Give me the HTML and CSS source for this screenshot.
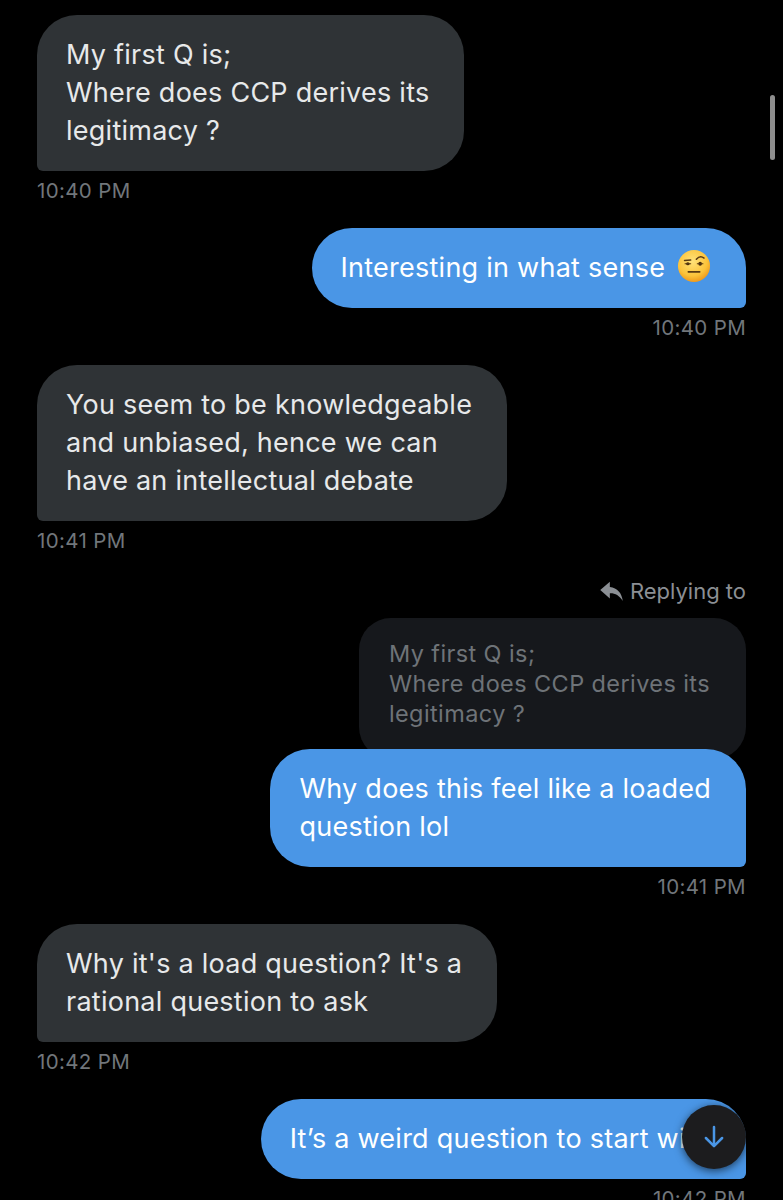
FILE: index.html
```html
<!DOCTYPE html>
<html lang="en">
<head>
<meta charset="utf-8">
<title>Chat</title>
<link rel="stylesheet" href="styles.css">
</head>
<body>
<main class="chat">
  <div class="msg in">
    <div class="bubble">My first Q is;<br>Where does CCP derives its<br>legitimacy ?</div>
    <div class="time">10:40 PM</div>
  </div>

  <div class="msg out">
    <div class="bubble">Interesting in what sense <svg class="emoji" viewBox="0 0 36 36" aria-label="face with raised eyebrow">
      <defs>
        <radialGradient id="eg" cx="45%" cy="35%" r="65%">
          <stop offset="0" stop-color="#ffe27a"/>
          <stop offset="0.7" stop-color="#fcc33a"/>
          <stop offset="1" stop-color="#ef9a1c"/>
        </radialGradient>
      </defs>
      <circle cx="18" cy="18" r="17" fill="url(#eg)"/>
      <path d="M8 12.2 L14.5 11.6" stroke="#5a3a12" stroke-width="1.6" stroke-linecap="round" fill="none"/>
      <path d="M20.5 10.8 Q24.5 6.2 28.6 9.6" stroke="#5a3a12" stroke-width="1.6" stroke-linecap="round" fill="none"/>
      <ellipse cx="11.5" cy="15.6" rx="1.9" ry="1.7" fill="#4a2d0c"/>
      <ellipse cx="24.5" cy="15.6" rx="1.9" ry="2.2" fill="#4a2d0c"/>
      <path d="M8.5 15.6 H14.5 M21.5 15.6 H27.5" stroke="#5a3a12" stroke-width="1.1" stroke-linecap="round"/>
      <path d="M12 24.2 H24" stroke="#5a3a12" stroke-width="1.8" stroke-linecap="round"/>
    </svg></div>
    <div class="time">10:40 PM</div>
  </div>

  <div class="msg in">
    <div class="bubble">You seem to be knowledgeable<br>and unbiased, hence we can<br>have an intellectual debate</div>
    <div class="time">10:41 PM</div>
  </div>

  <div class="msg out">
    <div class="reply-label">
      <svg class="reply-icon" viewBox="0 0 24 24" aria-hidden="true">
        <path d="M10.4 2.6 L1.2 10.6 L10.4 18.6 V13.6 C15.4 13.4 19.4 15.6 22.8 21 C22 13.8 17.6 8.4 10.4 7.7 Z" fill="currentColor"/>
      </svg>
      <span>Replying to</span>
    </div>
    <div class="quote">My first Q is;<br>Where does CCP derives its<br>legitimacy ?</div>
    <div class="bubble over">Why does this feel like a loaded<br>question lol</div>
    <div class="time">10:41 PM</div>
  </div>

  <div class="msg in">
    <div class="bubble">Why it's a load question? It's a<br>rational question to ask</div>
    <div class="time">10:42 PM</div>
  </div>

  <div class="msg out">
    <div class="bubble">It’s a weird question to start with</div>
    <div class="time">10:42 PM</div>
  </div>
</main>

<div class="scrollbar"></div>
<button class="scroll-down" aria-label="Scroll to bottom">
  <svg viewBox="0 0 24 24" aria-hidden="true">
    <path d="M12 4 V19 M5.5 12.8 L12 19.3 L18.5 12.8" stroke="currentColor" stroke-width="2" fill="none" stroke-linecap="round" stroke-linejoin="round"/>
  </svg>
</button>
</body>
</html>
```

FILE: styles.css
```css
html, body {
  margin: 0;
  padding: 0;
  background: #000;
  height: 1200px;
  overflow: hidden;
}

body {
  font-family: Inter, "Noto Sans", "Liberation Sans", sans-serif;
  color: #e7e9ea;
  position: relative;
}

.chat {
  display: flex;
  flex-direction: column;
  gap: 25px;
  padding: 15px 37px 0 37px;
}

.msg {
  display: flex;
  flex-direction: column;
}

.msg.in { align-items: flex-start; }
.msg.out { align-items: flex-end; }

.bubble {
  font-size: 27px;
  line-height: 38px;
  padding: 21px 35px 21px 29px;
  white-space: nowrap;
  border-radius: 40px;
  letter-spacing: 0.25px;
}

.msg.in .bubble {
  background: #2f3336;
  color: #e7e9ea;
  border-bottom-left-radius: 6px;
}

.msg.out .bubble {
  background: #4a96e6;
  color: #fff;
  border-bottom-right-radius: 6px;
}

.emoji {
  width: 34px;
  height: 34px;
  vertical-align: -6px;
  margin-left: 4px;
}

.time {
  margin-top: 8px;
  font-size: 20.5px;
  line-height: 24px;
  letter-spacing: 0.35px;
  color: #71767b;
}

.reply-label {
  display: flex;
  align-items: center;
  gap: 6px;
  font-size: 22px;
  line-height: 26px;
  color: #8b8f94;
  margin-bottom: 14px;
}

.reply-icon {
  width: 25px;
  height: 25px;
  color: #8b8f94;
}

.quote {
  background: #16181c;
  color: #6e7378;
  font-size: 23.5px;
  line-height: 30px;
  letter-spacing: 0.4px;
  padding: 21px 36px 30px 30px;
  border-radius: 32px;
  white-space: nowrap;
}

.bubble.over {
  margin-top: -10px;
  position: relative;
}

.scrollbar {
  position: absolute;
  top: 95px;
  right: 8px;
  width: 5px;
  height: 65px;
  border-radius: 3px;
  background: #8e8e8e;
}

.scroll-down {
  position: absolute;
  left: 682px;
  top: 1105px;
  width: 64px;
  height: 64px;
  border: none;
  border-radius: 50%;
  background: #1c1c1e;
  color: #4a96e6;
  display: flex;
  align-items: center;
  justify-content: center;
  padding: 0;
  box-shadow: 0 2px 8px rgba(0, 0, 0, 0.6);
}

.scroll-down svg {
  width: 30px;
  height: 30px;
}
```
